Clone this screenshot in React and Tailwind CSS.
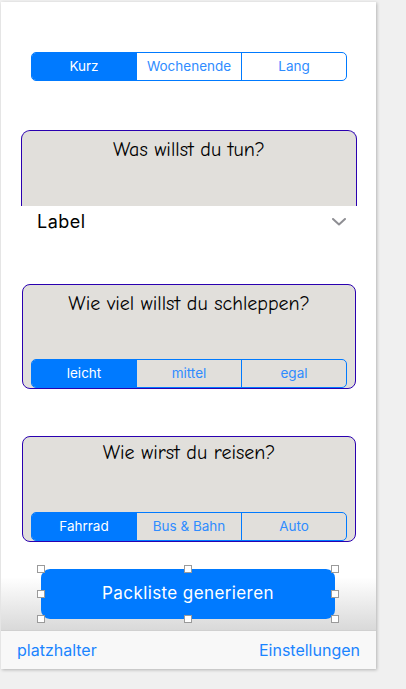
import React from "react";

const sys = { fontFamily: "Inter, 'Liberation Sans', sans-serif" };
const comic = { fontFamily: "'Comic Sans MS', 'Comic Neue', cursive" };

function Segmented({ items, className = "" }) {
  return (
    <div className={"flex h-[29px] w-[316px] rounded-[5px] border border-[#007aff] overflow-hidden " + className} style={sys}>
      {items.map((t, i) => (
        <div
          key={t}
          className={
            "flex-1 flex items-center justify-center text-[13.5px] " +
            (i === 0 ? "bg-[#007aff] text-white" : "text-[#2f8cff]") +
            (i > 0 ? " border-l border-[#007aff]" : "")
          }
        >
          {t}
        </div>
      ))}
    </div>
  );
}

function Handle() {
  return <div className="w-[8px] h-[8px] bg-white border border-[#9a9a9a]" />;
}

export default function App() {
  return (
    <div className="w-[406px] h-[689px] bg-[#f0f0f0] overflow-hidden">
      <div className="ml-[1px] mt-[2px] w-[375px] h-[667px] bg-white flex flex-col shadow-[1px_1px_3px_rgba(0,0,0,0.25)] relative">
        <div className="pt-[50px] pl-[30px]">
          <Segmented items={["Kurz", "Wochenende", "Lang"]} />
        </div>

        <div className="mt-[49px] ml-[20px] w-[336px] h-[76px] bg-[#e1dfdb] border border-b-0 border-[#2a00b0] rounded-t-[9px] flex justify-center">
          <div className="text-[20px] leading-[24px] text-black mt-[7px] font-medium" style={comic}>Was willst du tun?</div>
        </div>

        <div className="h-[30px] pl-[36px] pr-[30px] flex items-center justify-between">
          <span className="text-[18px] text-black tracking-[0.5px]" style={sys}>Label</span>
          <svg width="14" height="8" viewBox="0 0 14 8" className="mt-[2px]">
            <path d="M1 1 L7 6.5 L13 1" fill="none" stroke="#8e8e93" strokeWidth="2" strokeLinecap="round" strokeLinejoin="round" />
          </svg>
        </div>

        <div className="mt-[48px] ml-[21px] w-[334px] h-[105px] bg-[#e1dfdb] border border-[#2a00b0] rounded-[8px] flex flex-col items-center overflow-hidden">
          <div className="text-[20px] leading-[24px] text-black mt-[7px] font-medium" style={comic}>Wie viel willst du schleppen?</div>
          <div className="mt-auto">
            <Segmented items={["leicht", "mittel", "egal"]} />
          </div>
        </div>

        <div className="mt-[47px] ml-[21px] w-[334px] h-[106px] bg-[#e1dfdb] border border-[#2a00b0] rounded-[8px] flex flex-col items-center overflow-hidden">
          <div className="text-[20px] leading-[24px] text-black mt-[4px] font-medium" style={comic}>Wie wirst du reisen?</div>
          <div className="mt-auto">
            <Segmented items={["Fahrrad", "Bus & Bahn", "Auto"]} />
          </div>
        </div>

        <div className="flex-1 bg-gradient-to-b from-white from-40% to-[#d9d9d9] flex items-start">
          <div className="relative mt-[27px] ml-[40px] w-[294px] h-[50px] bg-[#007aff] rounded-[9px] flex items-center justify-center text-white text-[17px] tracking-[0.4px]" style={sys}>
            Packliste generieren
            <div className="absolute left-[-4px] top-[-4px]"><Handle /></div>
            <div className="absolute left-[143px] top-[-4px]"><Handle /></div>
            <div className="absolute right-[-4px] top-[-4px]"><Handle /></div>
            <div className="absolute left-[-4px] top-[21px]"><Handle /></div>
            <div className="absolute right-[-4px] top-[21px]"><Handle /></div>
            <div className="absolute left-[-4px] bottom-[-4px]"><Handle /></div>
            <div className="absolute left-[143px] bottom-[-4px]"><Handle /></div>
            <div className="absolute right-[-4px] bottom-[-4px]"><Handle /></div>
          </div>
        </div>

        <div className="h-[39px] border-t border-[#d0d0d0] bg-[#f8f8f8] flex items-center justify-between pl-[16px] pr-[16px] text-[16px] text-[#1a84ff]" style={sys}>
          <span>platzhalter</span>
          <span>Einstellungen</span>
        </div>
      </div>
    </div>
  );
}
